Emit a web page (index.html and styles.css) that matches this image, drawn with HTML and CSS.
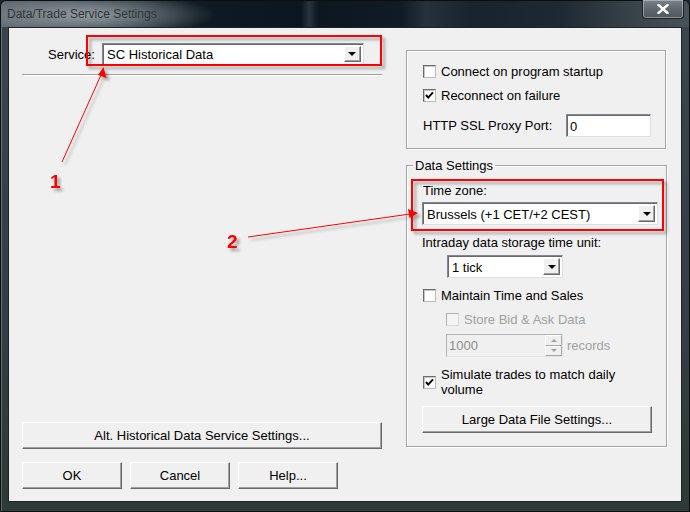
FILE: index.html
```html
<!DOCTYPE html>
<html lang="en">
<head>
    <meta charset="UTF-8">
    <title>Data/Trade Service Settings</title>
    <link rel="stylesheet" href="styles.css">
</head>
<body>
    <div class="window">
        <div class="titlebar">
            <span class="title">Data/Trade Service Settings</span>
            <span class="close-btn">
                <svg width="12" height="10" viewBox="0 0 12 10">
                    <path d="M1.5 1 L10.5 9 M10.5 1 L1.5 9" stroke="#fff" stroke-width="2.4" stroke-linecap="square"/>
                </svg>
            </span>
        </div>

        <div class="client">
            <!-- Colonne gauche -->
            <div class="col-left">
                <div class="service-row">
                    <span class="label">Service:</span>
                    <div class="combo combo-service">
                        <span class="combo-text">SC Historical Data</span>
                        <span class="combo-btn"><span class="tri"></span></span>
                    </div>
                </div>
                <div class="separator"></div>
                <div class="spacer"></div>
                <button class="btn btn-alt">Alt. Historical Data Service Settings...</button>
                <div class="btn-row">
                    <button class="btn btn-small">OK</button>
                    <button class="btn btn-small">Cancel</button>
                    <button class="btn btn-small">Help...</button>
                </div>
            </div>

            <!-- Colonne droite -->
            <div class="col-right">
                <div class="group group-conn">
                    <div class="check-row">
                        <span class="checkbox"></span>
                        <span>Connect on program startup</span>
                    </div>
                    <div class="check-row row-reconnect">
                        <span class="checkbox checked">
                            <svg width="11" height="11" viewBox="0 0 11 11"><path d="M2 5 L4.2 7.6 L9 2.4" fill="none" stroke="#000" stroke-width="2"/></svg>
                        </span>
                        <span>Reconnect on failure</span>
                    </div>
                    <div class="proxy-row">
                        <span>HTTP SSL Proxy Port:</span>
                        <div class="field field-proxy">0</div>
                    </div>
                </div>

                <fieldset class="group group-data">
                    <legend>Data Settings</legend>
                    <div class="label timezone-label">Time zone:</div>
                    <div class="combo combo-tz">
                        <span class="combo-text">Brussels (+1 CET/+2 CEST)</span>
                        <span class="combo-btn"><span class="tri"></span></span>
                    </div>
                    <div class="label intraday-label">Intraday data storage time unit:</div>
                    <div class="combo combo-tick">
                        <span class="combo-text">1 tick</span>
                        <span class="combo-btn"><span class="tri"></span></span>
                    </div>
                    <div class="check-row row-maintain">
                        <span class="checkbox"></span>
                        <span>Maintain Time and Sales</span>
                    </div>
                    <div class="check-row row-store disabled">
                        <span class="checkbox"></span>
                        <span>Store Bid &amp; Ask Data</span>
                    </div>
                    <div class="spin-row disabled">
                        <div class="field field-spin">
                            <span class="spin-text">1000</span>
                            <span class="spin-btns">
                                <span class="spin-up"><span class="tri-up"></span></span>
                                <span class="spin-down"><span class="tri-down"></span></span>
                            </span>
                        </div>
                        <span>records</span>
                    </div>
                    <div class="check-row row-simulate">
                        <span class="checkbox checked">
                            <svg width="11" height="11" viewBox="0 0 11 11"><path d="M2 5 L4.2 7.6 L9 2.4" fill="none" stroke="#000" stroke-width="2"/></svg>
                        </span>
                        <span class="simulate-text">Simulate trades to match daily volume</span>
                    </div>
                    <button class="btn btn-large">Large Data File Settings...</button>
                </fieldset>
            </div>
        </div>

        <!-- Annotations rouges -->
        <svg class="annotations" width="690" height="512" viewBox="0 0 690 512">
            <defs>
                <filter id="shadow" x="-20%" y="-20%" width="140%" height="140%">
                    <feDropShadow dx="3" dy="3" stdDeviation="1.6" flood-color="#000" flood-opacity="0.35"/>
                </filter>
            </defs>
            <g filter="url(#shadow)">
                <rect x="87" y="36" width="294" height="29" fill="none" stroke="#ff0000" stroke-width="2"/>
                <rect x="412" y="180" width="251" height="50" fill="none" stroke="#ff0000" stroke-width="2"/>
                <line x1="62" y1="162" x2="101" y2="75" stroke="#ff0000" stroke-width="1"/>
                <path d="M103.5 67 L106.5 78 L98 75 Z" fill="#ff0000"/>
                <line x1="248" y1="237" x2="410" y2="214" stroke="#ff0000" stroke-width="1"/>
                <path d="M418 213 L408 209 L409.5 218 Z" fill="#ff0000"/>
                <text x="50" y="188" class="num">1</text>
                <text x="227" y="248" class="num">2</text>
            </g>
        </svg>
    </div>
</body>
</html>
```

FILE: styles.css
```css
* {
    margin: 0;
    padding: 0;
    box-sizing: border-box;
}

body {
    width: 690px;
    height: 512px;
    overflow: hidden;
    font-family: 'Liberation Sans', Arial, sans-serif;
    font-size: 13px;
    line-height: 15px;
    color: #000;
    background: #1a2a30;
}

/* Fenetre */
.window {
    position: relative;
    width: 690px;
    height: 512px;
    display: flex;
    flex-direction: column;
    border: 1px solid #0c0f12;
    border-radius: 6px 6px 0 0;
    background: linear-gradient(180deg, #3b454d 0%, #353e45 60%, #2d3a36 100%);
    box-shadow: inset 1px 1px 0 rgba(255, 255, 255, 0.25);
}

.titlebar {
    position: relative;
    height: 26px;
    flex: none;
    border-radius: 6px 6px 0 0;
    background:
        radial-gradient(ellipse 130px 22px at 85px 14px, rgba(170, 178, 184, 0.8), rgba(170, 178, 184, 0) 100%),
        linear-gradient(90deg, #59626a 0px, #2c3841 120px, #0f1b24 200px, #0b1720 300px, #26343e 308px, #0c1720 318px, #101c25 400px, #26323b 425px, #18242d 470px, #1e2a33 560px, #3b454c 640px, #4a535a 690px);
}

.title {
    position: absolute;
    left: 6px;
    top: 6px;
    font-size: 12px;
    color: #2e3439;
}

.close-btn {
    position: absolute;
    right: 5px;
    top: -1px;
    width: 42px;
    height: 19px;
    display: flex;
    align-items: center;
    justify-content: center;
    border: 1px solid #1b2126;
    border-top: none;
    border-radius: 0 0 4px 4px;
    background: linear-gradient(180deg, #7b8389 0%, #60686e 50%, #4f575d 100%);
    box-shadow: inset 0 0 0 1px rgba(255, 255, 255, 0.35);
}

/* Zone client */
.client {
    flex: 1;
    margin: 0 7px 9px 7px;
    display: flex;
    border: 1px solid #1e2328;
    background: #f0f0f0;
}

.col-left {
    width: 360px;
    margin-left: 13px;
    display: flex;
    flex-direction: column;
    padding-bottom: 12px;
}

.service-row {
    margin-top: 15px;
    display: flex;
    align-items: center;
    padding-left: 26px;
    gap: 7px;
}

.separator {
    margin-top: 9px;
    height: 2px;
    border-top: 1px solid #a0a0a0;
    border-bottom: 1px solid #fff;
}

.spacer {
    flex: 1;
}

.btn-row {
    margin-top: 13px;
    display: flex;
    gap: 8px;
}

/* Boutons */
.btn {
    font-family: inherit;
    font-size: 13px;
    color: #000;
    height: 27px;
    background: #f0f0f0;
    border: 1px solid;
    border-color: #fff #696969 #696969 #fff;
    box-shadow: inset -1px -1px 0 #a0a0a0;
}

.btn-alt {
    width: 360px;
}

.btn-small {
    width: 100px;
}

.btn-large {
    width: 230px;
    margin-top: 9px;
}

/* Combo */
.combo {
    display: flex;
    align-items: center;
    background: #fff;
    border: 1px solid;
    border-color: #828790 #dcdfe4 #dcdfe4 #828790;
    box-shadow: inset 1px 1px 0 #6a6a6a;
    padding: 2px;
}

.combo-text {
    flex: 1;
    padding-left: 2px;
    padding-top: 1px;
}

.combo-btn {
    width: 17px;
    height: 100%;
    display: flex;
    align-items: center;
    justify-content: center;
    background: #f0f0f0;
    border: 1px solid;
    border-color: #fff #696969 #696969 #fff;
    box-shadow: inset -1px -1px 0 #a0a0a0;
}

.tri {
    width: 0;
    height: 0;
    border-left: 4px solid transparent;
    border-right: 4px solid transparent;
    border-top: 4px solid #000;
}

.combo-service {
    width: 262px;
    height: 22px;
}

.combo-tz {
    width: 236px;
    height: 23px;
    margin-top: 4px;
}

.combo-tick {
    width: 116px;
    height: 23px;
    margin-top: 5px;
    margin-left: 25px;
}

/* Colonne droite */
.col-right {
    width: 260px;
    margin-left: 24px;
    display: flex;
    flex-direction: column;
}

.group {
    border: 1px solid #a5a5a5;
    box-shadow: 1px 1px 0 #fff, inset 1px 1px 0 #fff;
}

.group-conn {
    margin-top: 22px;
    height: 99px;
    padding: 12px 14px 0 16px;
}

.check-row {
    display: flex;
    align-items: center;
    gap: 5px;
    min-height: 16px;
}

.checkbox {
    width: 13px;
    height: 13px;
    flex: none;
    display: flex;
    align-items: center;
    justify-content: center;
    background: #fff;
    border: 1px solid;
    border-color: #6d6d6d #b9b9b9 #b9b9b9 #6d6d6d;
    box-shadow: inset 1px 1px 0 #c8c8c8;
}

.row-reconnect {
    margin-top: 8px;
}

.proxy-row {
    margin-top: 11px;
    display: flex;
    align-items: center;
}

.field {
    background: #fff;
    border: 1px solid;
    border-color: #828790 #dcdfe4 #dcdfe4 #828790;
    box-shadow: inset 1px 1px 0 #6a6a6a;
}

.field-proxy {
    margin-left: auto;
    width: 85px;
    height: 23px;
    padding: 4px 0 0 3px;
}

/* Data Settings */
.group-data {
    margin-top: 9px;
    padding: 0 8px 13px 15px;
}

.group-data legend {
    margin-left: -9px;
    padding: 0 2px;
}

.timezone-label {
    margin-top: 10px;
    padding-left: 1px;
}

.intraday-label {
    margin-top: 10px;
}

.row-maintain {
    margin-top: 9px;
    padding-left: 1px;
}

.row-store {
    margin-top: 8px;
    padding-left: 24px;
}

.disabled {
    color: #a0a0a0;
}

.disabled .checkbox {
    background: #f4f4f4;
    border-color: #b0b0b0 #d8d8d8 #d8d8d8 #b0b0b0;
    box-shadow: none;
}

.spin-row {
    margin-top: 7px;
    margin-left: 24px;
    display: flex;
    align-items: center;
    gap: 4px;
}

.field-spin {
    width: 117px;
    height: 23px;
    display: flex;
    background: #f0f0f0;
    border-color: #b5b5b5 #e3e3e3 #e3e3e3 #b5b5b5;
    box-shadow: none;
}

.spin-text {
    flex: 1;
    padding: 3px 0 0 2px;
    color: #8c8c8c;
}

.spin-btns {
    width: 17px;
    display: flex;
    flex-direction: column;
}

.spin-up,
.spin-down {
    flex: 1;
    display: flex;
    align-items: center;
    justify-content: center;
    border: 1px solid;
    border-color: #fff #a8a8a8 #a8a8a8 #fff;
}

.tri-up {
    border-left: 3px solid transparent;
    border-right: 3px solid transparent;
    border-bottom: 3px solid #a0a0a0;
}

.tri-down {
    border-left: 3px solid transparent;
    border-right: 3px solid transparent;
    border-top: 3px solid #a0a0a0;
}

.row-simulate {
    margin-top: 10px;
    padding-left: 1px;
}

.simulate-text {
    max-width: 190px;
}

/* Annotations */
.annotations {
    position: absolute;
    left: -1px;
    top: -1px;
    pointer-events: none;
}

.num {
    font-family: 'Liberation Sans', Arial, sans-serif;
    font-size: 19px;
    font-weight: bold;
    fill: #ff0000;
}
```
